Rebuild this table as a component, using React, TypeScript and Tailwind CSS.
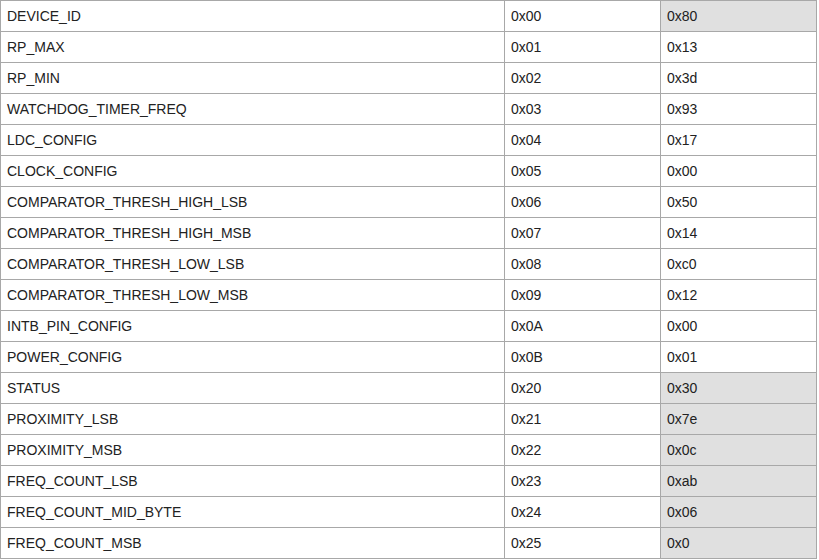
import React from 'react';

interface Register {
  name: string;
  addr: string;
  value: string;
  readOnly?: boolean;
}

const registers: Register[] = [
  { name: 'DEVICE_ID', addr: '0x00', value: '0x80', readOnly: true },
  { name: 'RP_MAX', addr: '0x01', value: '0x13' },
  { name: 'RP_MIN', addr: '0x02', value: '0x3d' },
  { name: 'WATCHDOG_TIMER_FREQ', addr: '0x03', value: '0x93' },
  { name: 'LDC_CONFIG', addr: '0x04', value: '0x17' },
  { name: 'CLOCK_CONFIG', addr: '0x05', value: '0x00' },
  { name: 'COMPARATOR_THRESH_HIGH_LSB', addr: '0x06', value: '0x50' },
  { name: 'COMPARATOR_THRESH_HIGH_MSB', addr: '0x07', value: '0x14' },
  { name: 'COMPARATOR_THRESH_LOW_LSB', addr: '0x08', value: '0xc0' },
  { name: 'COMPARATOR_THRESH_LOW_MSB', addr: '0x09', value: '0x12' },
  { name: 'INTB_PIN_CONFIG', addr: '0x0A', value: '0x00' },
  { name: 'POWER_CONFIG', addr: '0x0B', value: '0x01' },
  { name: 'STATUS', addr: '0x20', value: '0x30', readOnly: true },
  { name: 'PROXIMITY_LSB', addr: '0x21', value: '0x7e', readOnly: true },
  { name: 'PROXIMITY_MSB', addr: '0x22', value: '0x0c', readOnly: true },
  { name: 'FREQ_COUNT_LSB', addr: '0x23', value: '0xab', readOnly: true },
  { name: 'FREQ_COUNT_MID_BYTE', addr: '0x24', value: '0x06', readOnly: true },
  { name: 'FREQ_COUNT_MSB', addr: '0x25', value: '0x0', readOnly: true },
];

const cell = 'border border-[#a8a8a8] h-[31px] py-0 pl-[6px] pr-2 text-left align-middle';

const App: React.FC = () => {
  return (
    <div className="w-[819px] h-[560px] overflow-hidden bg-white text-[14px] text-[#222] font-['Liberation_Sans',Arial,sans-serif]">
      <table className="border-collapse table-fixed w-[816px]">
        <colgroup>
          <col className="w-[504px]" />
          <col className="w-[156px]" />
          <col className="w-[156px]" />
        </colgroup>
        <tbody>
          {registers.map((reg) => (
            <tr key={reg.addr}>
              <td className={cell}>{reg.name}</td>
              <td className={cell}>{reg.addr}</td>
              <td className={`${cell} ${reg.readOnly ? 'bg-[#e0e0e0]' : 'bg-white'}`}>{reg.value}</td>
            </tr>
          ))}
        </tbody>
      </table>
    </div>
  );
};

export default App;
